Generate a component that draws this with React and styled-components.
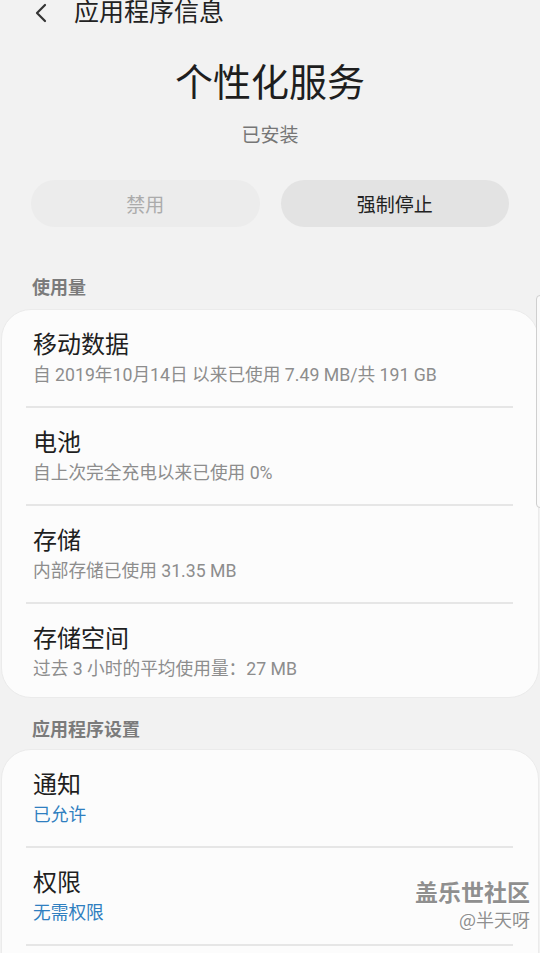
import React from "react";
import styled, { createGlobalStyle } from "styled-components";

const Global = createGlobalStyle`
  html, body { margin: 0; padding: 0; background: #f2f2f2; overflow: hidden; }
  body { font-family: Roboto, "Noto Sans CJK SC", sans-serif; }
`;

const Page = styled.div`
  position: relative;
  width: 540px;
  height: 953px;
  background: #f2f2f2;
  overflow: hidden;
  display: flex;
  flex-direction: column;
  & > * { flex-shrink: 0; }
`;

const Header = styled.div`
  display: flex;
  align-items: center;
  height: 25px;
  padding-left: 33px;
  gap: 25px;
`;

const HeaderTitle = styled.div`
  font-size: 25px;
  line-height: 25px;
  color: #222;
`;

const AppName = styled.div`
  margin-top: 35px;
  text-align: center;
  font-size: 38px;
  line-height: 46px;
  color: #1e1e1e;
`;

const Status = styled.div`
  margin-top: 18px;
  text-align: center;
  font-size: 19px;
  line-height: 24px;
  color: #767676;
`;

const ButtonRow = styled.div`
  margin-top: 32px;
  padding: 0 31px;
  display: grid;
  grid-template-columns: 1fr 1fr;
  gap: 21px;
`;

const Pill = styled.div`
  height: 47px;
  border-radius: 24px;
  display: flex;
  align-items: center;
  justify-content: center;
  font-size: 19px;
  background: ${(p) => (p.$disabled ? "#ececec" : "#e3e3e3")};
  color: ${(p) => (p.$disabled ? "#ababab" : "#222")};
`;

const SectionLabel = styled.div`
  margin-top: ${(p) => p.$mt}px;
  margin-bottom: ${(p) => p.$mb}px;
  padding-left: 32px;
  font-size: 18px;
  line-height: 22px;
  height: 22px;
  font-weight: 700;
  color: #7b7b7b;
`;

const Card = styled.div`
  margin: 0 1px;
  background: #fcfcfc;
  border: 1px solid #ebebeb;
  border-radius: 30px;
  overflow: hidden;
`;

const Row = styled.div`
  height: ${(p) => (p.$last ? 93 : 96)}px;
  box-sizing: border-box;
  padding-left: 31px;
  display: flex;
  flex-direction: column;
`;

const RowTitle = styled.div`
  margin-top: 21px;
  font-size: 24px;
  line-height: 28px;
  color: #1f1f1f;
`;

const RowSub = styled.div`
  margin-top: 5px;
  font-size: 17.7px;
  line-height: 22px;
  color: ${(p) => (p.$blue ? "#2f7fc0" : "#8d8d8d")};
`;

const Divider = styled.div`
  height: 2px;
  margin: 0 25px 0 24px;
  background: #e6e6e6;
`;

const ScrollThumb = styled.div`
  position: absolute;
  right: -4px;
  top: 295px;
  width: 8px;
  height: 213px;
  box-sizing: border-box;
  border: 1px solid #cfcfcf;
  border-radius: 6px;
  background: #fafafa;
`;

const Watermark = styled.div`
  position: absolute;
  right: 10px;
  top: 876px;
  display: flex;
  flex-direction: column;
  align-items: flex-end;
  font-family: "Noto Sans CJK SC", sans-serif;
  text-shadow: 1px 1px 0 #fff, -1px -1px 0 #fff;
`;

const WmMain = styled.div`
  font-size: 23px;
  line-height: 30px;
  font-weight: 700;
  color: #8f8f8f;
`;

const WmSub = styled.div`
  font-size: 18px;
  line-height: 26px;
  color: #8f8f8f;
`;

const BackIcon = () => (
  <svg width="16" height="22" viewBox="0 0 16 22" fill="none">
    <path d="M12 3 L4 11 L12 19" stroke="#333" strokeWidth="2.2" strokeLinecap="round" strokeLinejoin="round" />
  </svg>
);

const usage = [
  { t: "移动数据", s: "自 2019年10月14日 以来已使用 7.49 MB/共 191 GB" },
  { t: "电池", s: "自上次完全充电以来已使用 0%" },
  { t: "存储", s: "内部存储已使用 31.35 MB" },
  { t: "存储空间", s: "过去 3 小时的平均使用量：27 MB" },
];

const settings = [
  { t: "通知", s: "已允许" },
  { t: "权限", s: "无需权限" },
];

export default function App() {
  return (
    <>
      <Global />
      <Page>
        <Header>
          <BackIcon />
          <HeaderTitle>应用程序信息</HeaderTitle>
        </Header>
        <AppName>个性化服务</AppName>
        <Status>已安装</Status>
        <ButtonRow>
          <Pill $disabled>禁用</Pill>
          <Pill>强制停止</Pill>
        </ButtonRow>
        <SectionLabel $mt={50} $mb={10}>使用量</SectionLabel>
        <Card>
          {usage.map((u, i) => (
            <React.Fragment key={u.t}>
              <Row $last={i === usage.length - 1}>
                <RowTitle>{u.t}</RowTitle>
                <RowSub>{u.s}</RowSub>
              </Row>
              {i < usage.length - 1 && <Divider />}
            </React.Fragment>
          ))}
        </Card>
        <SectionLabel $mt={21} $mb={8}>应用程序设置</SectionLabel>
        <Card>
          {settings.map((u) => (
            <React.Fragment key={u.t}>
              <Row>
                <RowTitle>{u.t}</RowTitle>
                <RowSub $blue>{u.s}</RowSub>
              </Row>
              <Divider />
            </React.Fragment>
          ))}
          <Row />
        </Card>
        <ScrollThumb />
        <Watermark>
          <WmMain>盖乐世社区</WmMain>
          <WmSub>@半天呀</WmSub>
        </Watermark>
      </Page>
    </>
  );
}
